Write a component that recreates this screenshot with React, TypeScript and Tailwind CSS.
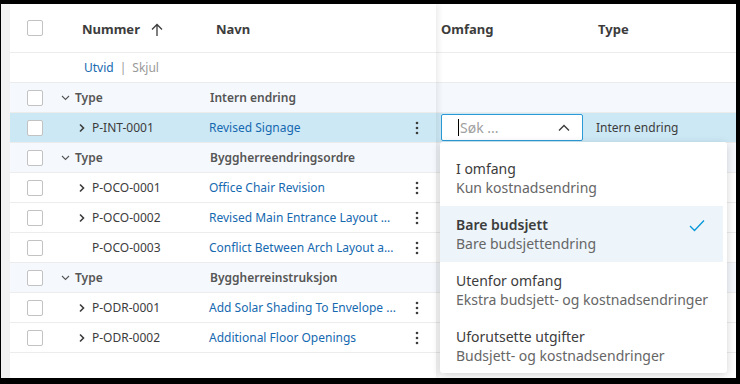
import React from 'react';

const font = { fontFamily: '"Noto Sans", "Open Sans", sans-serif' };

function Checkbox() {
  return <div className="w-4 h-4 border border-[#c2c2c2] rounded-[2px] bg-white" />;
}

function ChevronRight() {
  return (
    <svg width="8" height="10" viewBox="0 0 8 10" className="text-[#3c3c3c]">
      <path d="M2 1.5 L5.5 5 L2 8.5" fill="none" stroke="currentColor" strokeWidth="1.6" />
    </svg>
  );
}

function ChevronDown() {
  return (
    <svg width="9" height="6" viewBox="0 0 9 6" className="text-[#555]">
      <path d="M1 1 L4.5 4.5 L8 1" fill="none" stroke="currentColor" strokeWidth="1.1" />
    </svg>
  );
}

function Kebab() {
  return (
    <svg width="4" height="14" viewBox="0 0 4 14" className="text-[#3c3c3c]">
      <circle cx="2" cy="2" r="1.3" fill="currentColor" />
      <circle cx="2" cy="7" r="1.3" fill="currentColor" />
      <circle cx="2" cy="12" r="1.3" fill="currentColor" />
    </svg>
  );
}

type Row =
  | { kind: 'group'; label: string }
  | { kind: 'item'; num: string; name: string; expand: boolean; selected?: boolean };

const rows: Row[] = [
  { kind: 'group', label: 'Intern endring' },
  { kind: 'item', num: 'P-INT-0001', name: 'Revised Signage', expand: true, selected: true },
  { kind: 'group', label: 'Byggherreendringsordre' },
  { kind: 'item', num: 'P-OCO-0001', name: 'Office Chair Revision', expand: true },
  { kind: 'item', num: 'P-OCO-0002', name: 'Revised Main Entrance Layout ...', expand: true },
  { kind: 'item', num: 'P-OCO-0003', name: 'Conflict Between Arch Layout a...', expand: false },
  { kind: 'group', label: 'Byggherreinstruksjon' },
  { kind: 'item', num: 'P-ODR-0001', name: 'Add Solar Shading To Envelope ...', expand: true },
  { kind: 'item', num: 'P-ODR-0002', name: 'Additional Floor Openings', expand: true },
];

const options = [
  { title: 'I omfang', sub: 'Kun kostnadsendring' },
  { title: 'Bare budsjett', sub: 'Bare budsjettendring', active: true },
  { title: 'Utenfor omfang', sub: 'Ekstra budsjett- og kostnadsendringer' },
  { title: 'Uforutsette utgifter', sub: 'Budsjett- og kostnadsendringer' },
];

function LeftRow({ row }: { row: Row }) {
  if (row.kind === 'group') {
    return (
      <div className="flex items-center h-[30px] border-b border-[#ececec] bg-[#f5f9fd]">
        <div className="w-[50px] pl-[17px]"><Checkbox /></div>
        <div className="w-[149px] flex items-center pl-[1px] gap-[5px] text-[12px] font-semibold text-[#555]">
          <ChevronDown />
          <span>Type</span>
        </div>
        <div className="flex-1 pl-[1px] text-[12px] font-semibold text-[#555]">{row.label}</div>
      </div>
    );
  }
  return (
    <div className={`flex items-center h-[30px] border-b border-[#ececec] ${row.selected ? 'bg-[#cde8f5]' : 'bg-white'}`}>
      <div className="w-[50px] pl-[17px]"><Checkbox /></div>
      <div className="w-[149px] flex items-center pl-[18px] gap-[6px] text-[12px] text-[#3c3c3c]">
        <span className="w-2 flex">{row.expand && <ChevronRight />}</span>
        <span>{row.num}</span>
      </div>
      <div className="flex-1 flex items-center justify-between pr-[17px] text-[12px] text-[#1569b0]">
        <span className="whitespace-nowrap">{row.name}</span>
        <Kebab />
      </div>
    </div>
  );
}

function RightRow({ row }: { row: Row }) {
  if (row.kind === 'group') {
    return <div className="h-[30px] border-b border-[#ececec] bg-[#f5f9fd]" />;
  }
  if (row.selected) {
    return (
      <div className="flex items-center h-[30px] border-b border-[#ececec] bg-[#cde8f5]">
        <div className="w-[156px] pl-[5px]">
          <div className="w-[142px] h-[27px] bg-white border border-[#2b9ad6] rounded-[2px] flex items-center pl-[16px] pr-[12px]">
            <span className="w-px h-[17px] bg-black" />
            <span className="flex-1 text-[14px] text-[#a0a0a0] pl-[1px]">Søk ...</span>
            <svg width="12" height="8" viewBox="0 0 12 8" className="text-[#3c3c3c]">
              <path d="M1 6.5 L6 1.5 L11 6.5" fill="none" stroke="currentColor" strokeWidth="1.4" />
            </svg>
          </div>
        </div>
        <div className="flex-1 pl-[4px] text-[12px] text-[#3c3c3c]">Intern endring</div>
      </div>
    );
  }
  return <div className="h-[30px] border-b border-[#ececec] bg-white" />;
}

export default function App() {
  return (
    <div style={font} className="w-[740px] h-[384px] bg-black pt-[4px] pr-[4px] pb-[6px] pl-[1px]">
      <div className="flex h-full">
        <div className="w-[9px] bg-[#f2f2f2]" />
        <div className="flex-1 flex bg-white relative">
          {/* pinned columns */}
          <div className="w-[426px] relative z-10 bg-white shadow-[3px_0_5px_rgba(0,0,0,0.07)]">
            <div className="flex items-center h-[49px] pt-[3px] border-b border-[#ececec]">
              <div className="w-[50px] pl-[17px] -mt-[3px]"><Checkbox /></div>
              <div className="w-[149px] flex items-center pl-[22px] gap-[11px] text-[13px] font-bold text-[#3c3c3c]">
                <span>Nummer</span>
                <svg width="12" height="14" viewBox="0 0 12 14" className="text-[#3c3c3c]">
                  <path d="M6 13 V1.5 M1 6.5 L6 1.5 L11 6.5" fill="none" stroke="currentColor" strokeWidth="1.3" />
                </svg>
              </div>
              <div className="flex-1 pl-[7px] text-[13px] font-bold text-[#3c3c3c]">Navn</div>
            </div>
            <div className="flex items-center h-[30px] border-b border-[#ececec] pl-[74px] text-[12px] gap-[6px]">
              <span className="text-[#1569b0]">Utvid</span>
              <span className="text-[#999]">|</span>
              <span className="text-[#999]">Skjul</span>
            </div>
            {rows.map((r, i) => (
              <LeftRow key={i} row={r} />
            ))}
          </div>
          {/* scrolling columns */}
          <div className="flex-1 relative">
            <div className="flex items-center h-[49px] pt-[3px] border-b border-[#ececec] text-[13px] font-bold text-[#3c3c3c]">
              <div className="w-[156px] pl-[5px]">Omfang</div>
              <div className="flex-1 pl-[6px]">Type</div>
            </div>
            <div className="h-[30px] border-b border-[#ececec]" />
            {rows.map((r, i) => (
              <RightRow key={i} row={r} />
            ))}
            <div className="absolute left-[4px] top-[138px] w-[287px] h-[231px] bg-white rounded-[3px] shadow-[0_2px_8px_rgba(0,0,0,0.18)] pt-[8px] z-20">
              {options.map((o) => (
                <div
                  key={o.title}
                  className={`w-[283px] h-[56px] flex items-center justify-between pl-[16px] pr-[18px] ${o.active ? 'bg-[#edf5fb]' : ''}`}
                >
                  <div className="flex flex-col leading-[19px] text-[14px] whitespace-nowrap">
                    <span className={o.active ? 'font-semibold text-[#3c3c3c]' : 'text-[#3c3c3c]'}>{o.title}</span>
                    <span className="text-[#666]">{o.sub}</span>
                  </div>
                  {o.active && (
                    <svg width="16" height="13" viewBox="0 0 16 13" className="text-[#0696d7] mb-[18px]">
                      <path d="M1 7 L5.5 11.5 L15 1.5" fill="none" stroke="currentColor" strokeWidth="1.3" />
                    </svg>
                  )}
                </div>
              ))}
            </div>
          </div>
        </div>
      </div>
    </div>
  );
}
